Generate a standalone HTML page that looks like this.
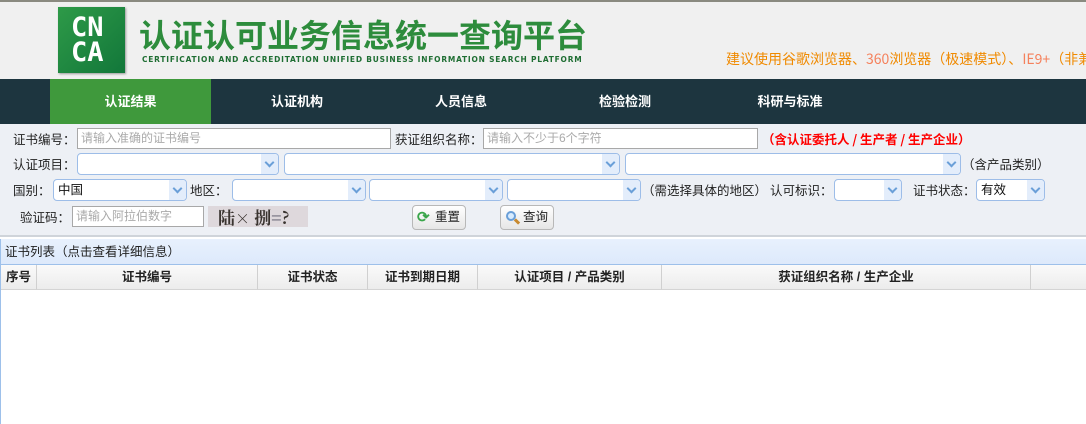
<!DOCTYPE html>
<html><head><meta charset="utf-8"><style>
*{margin:0;padding:0;box-sizing:border-box}
body{width:1086px;height:424px;overflow:hidden;background:#fff;font-family:"Liberation Sans","Noto Sans CJK SC",sans-serif;font-size:12px;color:#222;position:relative}
.a{position:absolute}
.hdr{left:0;top:0;width:1086px;height:79px;background:#f0f0f0;border-top:2px solid #8a8a80}
.logo{left:58px;top:7px;width:67px;height:66px;background:linear-gradient(135deg,#2e9a48,#12773a);box-shadow:1px 1px 2px #999}
.logo span{position:absolute;color:#fff;font:bold 27px/26px "DejaVu Sans Mono",monospace;letter-spacing:0px}
.title{left:139px;top:12px;font-size:32px;font-weight:bold;color:#2d8c3c;white-space:nowrap;font-family:"Noto Sans CJK SC",sans-serif;line-height:44px}
.sub{left:142px;top:54px;font-size:8.3px;font-weight:bold;color:#1f6e33;letter-spacing:.8px;white-space:nowrap;font-family:"DejaVu Sans Condensed","Liberation Sans",sans-serif}
.tip{left:726px;top:49px;font-size:14px;color:#f08a00;white-space:nowrap;font-family:"Noto Sans CJK SC",sans-serif}
.nav{left:0;top:79px;width:1086px;height:45px;background:#1d353f}
.tab{top:79px;height:45px;line-height:45px;color:#fff;font-weight:bold;font-size:13px;text-align:center;width:160px}
.form{left:0;top:124px;width:1086px;height:113px;background:#edf0f5;border-bottom:2px solid #cfd4da}
.lb{font-size:12.5px;color:#222;white-space:nowrap;font-family:"Noto Sans CJK SC",sans-serif;line-height:17px}
.in{height:21px;background:#fff;border:1px solid #a8a8a8;color:#aaa;font-size:12px;line-height:19px;padding-left:3px;white-space:nowrap;overflow:hidden}
.sel{height:22px;background:#fff;border:1px solid #9dbde8;border-radius:4px;font-size:12.5px;line-height:20px;padding-left:4px;color:#111}
.sel:after{content:"";position:absolute;right:0;top:0;width:17px;height:20px;background:#e3edfb;border-radius:0 4px 4px 0}
.sel:before{content:"";position:absolute;right:5px;top:5px;width:5px;height:5px;border-right:2px solid #6a9fd8;border-bottom:2px solid #6a9fd8;transform:rotate(45deg);z-index:1}
.btn{height:25px;border:1px solid #b8b8b8;border-radius:4px;background:linear-gradient(#fff,#e6e6e6);font-size:12.5px;line-height:23px;padding-left:22px}
.bar{left:0;top:239px;width:1086px;height:26px;background:linear-gradient(#e8f1fd,#dde9fb);border-bottom:1px solid #9dc0ea;border-left:1px solid #9dc0ea;font-size:12.5px;line-height:24px;padding-left:4px;font-family:"Noto Sans CJK SC",sans-serif}
.th{top:265px;height:25px;background:linear-gradient(#fafafa,#ececec);border-bottom:1px solid #d4d4d4;border-right:1px solid #d0d0d0;font-weight:bold;font-size:12.5px;line-height:24px;text-align:center}
</style></head><body>
<div class="a hdr"></div>
<div class="a logo"><span style="left:13px;top:8px">CN</span><span style="left:13px;top:33px">CA</span></div>
<div class="a title">认证认可业务信息统一查询平台</div>
<div class="a sub">CERTIFICATION AND ACCREDITATION UNIFIED BUSINESS INFORMATION SEARCH PLATFORM</div>
<div class="a tip">建议使用谷歌浏览器、<span style="color:#f5815c">360</span>浏览器（极速模式）、<span style="color:#f5815c">IE9+</span>（非兼容</div>
<div class="a nav"></div>
<div class="a tab" style="left:50px;width:161px;background:#3f993c">认证结果</div>
<div class="a tab" style="left:217px">认证机构</div>
<div class="a tab" style="left:381px">人员信息</div>
<div class="a tab" style="left:545px">检验检测</div>
<div class="a tab" style="left:710px">科研与标准</div>
<div class="a" style="left:125px;top:120px;width:0;height:0;border:4px solid transparent;border-bottom-color:#edf0f5"></div>
<div class="a form"></div>
<div class="a lb" style="left:13px;top:130px">证书编号：</div>
<div class="a in" style="left:77px;top:128px;width:314px">请输入准确的证书编号</div>
<div class="a lb" style="left:395px;top:130px">获证组织名称：</div>
<div class="a in" style="left:483px;top:128px;width:275px">请输入不少于6个字符</div>
<div class="a lb" style="left:762px;top:130px;color:#f00;font-weight:bold">（含认证委托人 / 生产者 / 生产企业）</div>
<div class="a lb" style="left:13px;top:155px">认证项目：</div>
<div class="a sel" style="left:77px;top:153px;width:202px"></div>
<div class="a sel" style="left:284px;top:153px;width:336px"></div>
<div class="a sel" style="left:625px;top:153px;width:336px"></div>
<div class="a lb" style="left:962px;top:155px">（含产品类别）</div>
<div class="a lb" style="left:13px;top:181px">国别：</div>
<div class="a sel" style="left:53px;top:179px;width:134px">中国</div>
<div class="a lb" style="left:190px;top:181px">地区：</div>
<div class="a sel" style="left:232px;top:179px;width:134px"></div>
<div class="a sel" style="left:369px;top:179px;width:134px"></div>
<div class="a sel" style="left:507px;top:179px;width:134px"></div>
<div class="a lb" style="left:642px;top:181px">（需选择具体的地区）</div>
<div class="a lb" style="left:770px;top:181px">认可标识：</div>
<div class="a sel" style="left:834px;top:179px;width:68px"></div>
<div class="a lb" style="left:913px;top:181px">证书状态：</div>
<div class="a sel" style="left:976px;top:179px;width:69px">有效</div>
<div class="a lb" style="left:20px;top:208px">验证码：</div>
<div class="a in" style="left:72px;top:206px;width:132px">请输入阿拉伯数字</div>
<div class="a" style="left:208px;top:206px;width:100px;height:21px;background:#ded8dc;font:bold 17px/21px 'Noto Serif CJK SC',serif;color:#3a3430;padding-left:10px;white-space:nowrap">陆<span style="font-size:15px">×</span> 捌<span style="color:#556">=</span>?</div>
<div class="a btn" style="left:412px;top:205px;width:54px"><span class="a" style="left:4px;top:3px;color:#3aa64a;font-size:15px;line-height:17px;font-weight:bold">⟳</span>重置</div>
<div class="a btn" style="left:500px;top:205px;width:54px"><span class="a" style="left:5px;top:5px;width:10px;height:10px;border:2px solid #6a9fd8;border-radius:50%;background:#d8ecff"></span><span class="a" style="left:13px;top:14px;width:6px;height:3px;background:#c88a30;transform:rotate(45deg)"></span>查询</div>
<div class="a bar">证书列表（点击查看详细信息）</div>
<div class="a" style="left:0;top:265px;width:1px;height:159px;background:#9dc0ea"></div>
<div class="a th" style="left:1px;width:36px">序号</div>
<div class="a th" style="left:37px;width:221px">证书编号</div>
<div class="a th" style="left:258px;width:110px">证书状态</div>
<div class="a th" style="left:368px;width:110px">证书到期日期</div>
<div class="a th" style="left:478px;width:184px">认证项目 / 产品类别</div>
<div class="a th" style="left:662px;width:369px">获证组织名称 / 生产企业</div>
<div class="a th" style="left:1031px;width:55px;border-right:0"></div>
</body></html>
